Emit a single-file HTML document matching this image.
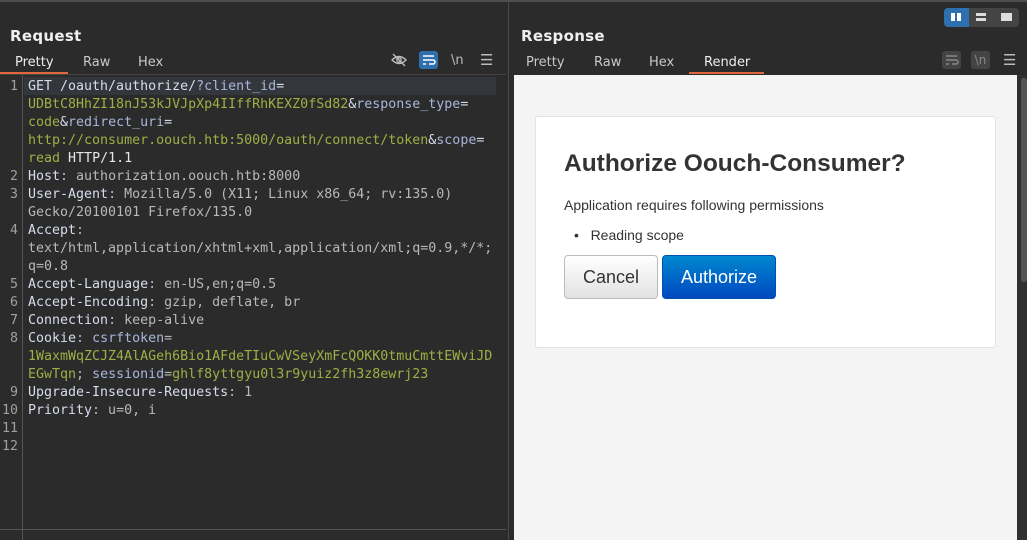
<!DOCTYPE html>
<html><head><style>
*{margin:0;padding:0;box-sizing:border-box}
body{width:1027px;height:540px;background:#2b2b2b;position:relative;overflow:hidden;font-family:"DejaVu Sans","Liberation Sans",sans-serif;color:#ddd}
.a{position:absolute}
.title{font-size:15px;font-weight:bold;color:#f0f0f0;letter-spacing:0.3px}
.tab{font-size:13px;color:#c8c8c8}
.code{font-family:"DejaVu Sans Mono",monospace;font-size:13.3px;line-height:18px;white-space:pre;color:#b8b8b8}
.ln{font-family:"DejaVu Sans Mono",monospace;font-size:13.3px;line-height:18px;color:#a0a0a0;text-align:right;width:18px}
.ln div{height:18px}
.k{color:#d6dcec}.p{color:#a9b6dc}.g{color:#9db044}.w{color:#e6e6e6}
</style></head><body>
<div class="a" style="left:0;top:0;width:1027px;height:2px;background:#4d4d4d"></div>
<!-- left panel -->
<div class="a title" style="left:10px;top:27px">Request</div>
<div class="a tab" style="left:15px;top:55px;color:#eee">Pretty</div>
<div class="a" style="left:0;top:72px;width:68px;height:2px;background:#e0683a"></div>
<div class="a tab" style="left:83px;top:55px">Raw</div>
<div class="a tab" style="left:138px;top:55px">Hex</div>
<div class="a" style="left:0;top:74px;width:506px;height:1px;background:#444"></div>
<svg class="a" style="left:390px;top:52px" width="18" height="16" viewBox="0 0 18 16"><path d="M2 8 Q9 1 16 8 Q9 15 2 8Z" fill="none" stroke="#bbb" stroke-width="1.4"/><circle cx="9" cy="8" r="2.2" fill="none" stroke="#bbb" stroke-width="1.3"/><path d="M3 2 L15 14" stroke="#bbb" stroke-width="1.4"/></svg>
<div class="a" style="left:419px;top:51px;width:19px;height:18px;background:#2e6fb0;border-radius:3px"></div>
<svg class="a" style="left:419px;top:51px" width="19" height="18" viewBox="0 0 19 18"><path d="M4 5h11M4 9h10a2 2 0 0 1 0 4h-4M4 13h3" fill="none" stroke="#fff" stroke-width="1.5"/></svg>
<div class="a" style="left:451px;top:53px;font-size:13px;color:#bbb">\n</div>
<div class="a" style="left:480px;top:51px;font-size:15px;color:#bbb">☰</div>
<div class="a" style="left:22px;top:75px;width:1px;height:465px;background:#555"></div>
<div class="a" style="left:24px;top:77px;width:472px;height:18px;background:#33373c"></div>
<div class="a ln" style="left:0;top:78px"><div>1</div><div></div><div></div><div></div><div></div><div>2</div><div>3</div><div></div><div>4</div><div></div><div></div><div>5</div><div>6</div><div>7</div><div>8</div><div></div><div></div><div>9</div><div>10</div><div>11</div><div>12</div></div>
<div class="a code" style="left:28px;top:78px"><span class="k">GET /oauth/authorize/</span><span class="p">?client_id</span><span class="k">=</span>
<span class="g">UDBtC8HhZI18nJ53kJVJpXp4IIffRhKEXZ0fSd82</span><span class="k">&amp;</span><span class="p">response_type</span><span class="k">=</span>
<span class="g">code</span><span class="k">&amp;</span><span class="p">redirect_uri</span><span class="k">=</span>
<span class="g">http://consumer.oouch.htb:5000/oauth/connect/token</span><span class="k">&amp;</span><span class="p">scope</span><span class="k">=</span>
<span class="g">read</span> <span class="w">HTTP/1.1</span>
<span class="k">Host</span>: authorization.oouch.htb:8000
<span class="k">User-Agent</span>: Mozilla/5.0 (X11; Linux x86_64; rv:135.0)
Gecko/20100101 Firefox/135.0
<span class="k">Accept</span>:
text/html,application/xhtml+xml,application/xml;q=0.9,*/*;
q=0.8
<span class="k">Accept-Language</span>: en-US,en;q=0.5
<span class="k">Accept-Encoding</span>: gzip, deflate, br
<span class="k">Connection</span>: keep-alive
<span class="k">Cookie</span>: <span class="p">csrftoken</span>=
<span class="g">1WaxmWqZCJZ4AlAGeh6Bio1AFdeTIuCwVSeyXmFcQOKK0tmuCmttEWviJD</span>
<span class="g">EGwTqn</span>; <span class="p">sessionid</span>=<span class="g">ghlf8yttgyu0l3r9yuiz2fh3z8ewrj23</span>
<span class="k">Upgrade-Insecure-Requests</span>: 1
<span class="k">Priority</span>: u=0, i</div>
<div class="a" style="left:0;top:529px;width:506px;height:1px;background:#555"></div>
<div class="a" style="left:508px;top:2px;width:1px;height:538px;background:#4a4a4a"></div>
<!-- right panel -->
<div class="a" style="left:944px;top:8px;width:75px;height:19px;background:#444;border-radius:4px"></div>
<div class="a" style="left:944px;top:8px;width:25px;height:19px;background:#2e6fb0;border-radius:4px 0 0 4px"></div>
<div class="a" style="left:951px;top:13px;width:4px;height:8px;background:#fff"></div>
<div class="a" style="left:957px;top:13px;width:4px;height:8px;background:#fff"></div>
<div class="a" style="left:976px;top:13px;width:10px;height:3px;background:#ddd"></div>
<div class="a" style="left:976px;top:18px;width:10px;height:3px;background:#ddd"></div>
<div class="a" style="left:1001px;top:13px;width:11px;height:8px;background:#ddd"></div>
<div class="a title" style="left:521px;top:27px">Response</div>
<div class="a tab" style="left:526px;top:55px">Pretty</div>
<div class="a tab" style="left:594px;top:55px">Raw</div>
<div class="a tab" style="left:649px;top:55px">Hex</div>
<div class="a tab" style="left:704px;top:55px;color:#eee">Render</div>
<div class="a" style="left:689px;top:72px;width:75px;height:2px;background:#e0683a"></div>
<div class="a" style="left:942px;top:51px;width:19px;height:18px;background:#444;border-radius:3px"></div>
<svg class="a" style="left:942px;top:51px" width="19" height="18" viewBox="0 0 19 18"><path d="M4 5h11M4 9h10a2 2 0 0 1 0 4h-4M4 13h3" fill="none" stroke="#888" stroke-width="1.5"/></svg>
<div class="a" style="left:971px;top:51px;width:19px;height:18px;background:#444;border-radius:3px;font-size:12px;color:#888;text-align:center;line-height:18px">\n</div>
<div class="a" style="left:1003px;top:51px;font-size:15px;color:#bbb">☰</div>
<div class="a" style="left:514px;top:75px;width:503px;height:465px;background:#f4f4f4"></div>
<div class="a" style="left:1017px;top:75px;width:10px;height:465px;background:#303030"></div>
<div class="a" style="left:1021px;top:78px;width:6px;height:204px;background:#555;border-radius:3px"></div>
<div class="a" style="left:535px;top:116px;width:461px;height:232px;background:#fff;border:1px solid #e2e2e2;border-radius:3px;font-family:'Liberation Sans',sans-serif;color:#333">
 <div class="a" style="left:28px;top:33px;font-size:24.5px;font-weight:bold">Authorize Oouch-Consumer?</div>
 <div class="a" style="left:28px;top:80px;font-size:14px">Application requires following permissions</div>
 <div class="a" style="left:38px;top:110px;font-size:14px">•&nbsp;&nbsp;&nbsp;Reading scope</div>
 <div class="a" style="left:28px;top:138px;width:94px;height:44px;border:1px solid #bbb;border-radius:4px;background:linear-gradient(#fff,#e2e2e2);font-size:18px;text-align:center;line-height:42px">Cancel</div>
 <div class="a" style="left:126px;top:138px;width:114px;height:44px;border:1px solid #0050b0;border-radius:4px;background:linear-gradient(#0088d0,#0048c0);color:#fff;font-size:18px;text-align:center;line-height:42px">Authorize</div>
</div>
</body></html>
